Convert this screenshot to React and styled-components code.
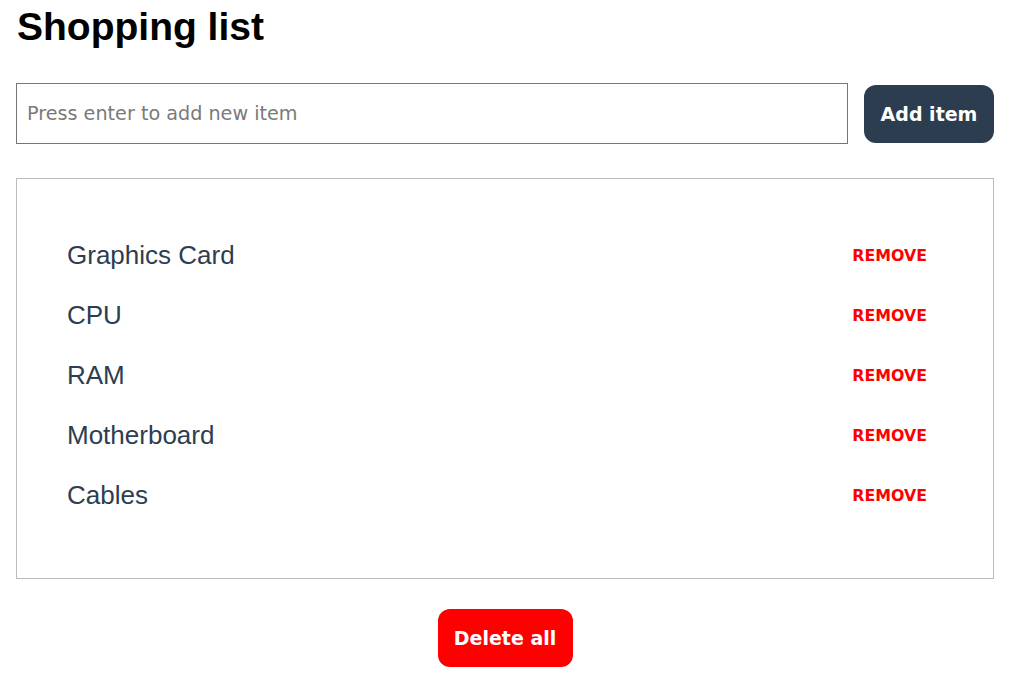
import React, { useState } from "react";
import styled, { createGlobalStyle } from "styled-components";

const GlobalStyle = createGlobalStyle`
  body {
    margin: 0;
    background: #fff;
    font-family: "Liberation Sans", Arial, sans-serif;
  }
`;

const Page = styled.div`
  width: 978px;
  padding: 0 16px;
`;

const Title = styled.h1`
  margin: 5px 0 0 1px;
  font-size: 39px;
  line-height: 44px;
  font-weight: 700;
  color: #000;
`;

const AddRow = styled.div`
  display: flex;
  align-items: center;
  gap: 16px;
  margin-top: 34px;
`;

const ItemInput = styled.input`
  flex: 1;
  height: 61px;
  box-sizing: border-box;
  border: 1px solid #767676;
  padding: 0 10px;
  font-family: "DejaVu Sans", Verdana, sans-serif;
  font-size: 19.2px;
  color: #222;
  outline: none;
  &::placeholder {
    color: #7a7a7a;
  }
`;

const Button = styled.button`
  border: none;
  border-radius: 12px;
  height: 58px;
  padding: 0;
  width: ${(props) => props.width}px;
  background: ${(props) => props.bg};
  color: #fff;
  font-family: "DejaVu Sans", Verdana, sans-serif;
  font-weight: 700;
  font-size: 19px;
  cursor: pointer;
`;

const ListBox = styled.div`
  margin-top: 34px;
  border: 1px solid #bbb;
  padding: 46px 50px 53px 50px;
`;

const Row = styled.div`
  display: flex;
  align-items: center;
  justify-content: space-between;
  height: 60px;
`;

const ItemName = styled.span`
  font-size: 26px;
  color: #2c3e50;
`;

const RemoveLink = styled.span`
  font-family: "DejaVu Sans", Verdana, sans-serif;
  font-weight: 700;
  font-size: 15.8px;
  color: #ff0000;
  margin-right: 16px;
  cursor: pointer;
`;

const Footer = styled.div`
  display: flex;
  justify-content: center;
  margin-top: 30px;
`;

const App = () => {
  const [items] = useState([
    "Graphics Card",
    "CPU",
    "RAM",
    "Motherboard",
    "Cables",
  ]);

  return (
    <Page>
      <GlobalStyle />
      <Title>Shopping list</Title>
      <AddRow>
        <ItemInput placeholder="Press enter to add new item" />
        <Button bg="#2c3d50" width={130}>
          Add item
        </Button>
      </AddRow>
      <ListBox>
        {items.map((item) => (
          <Row key={item}>
            <ItemName>{item}</ItemName>
            <RemoveLink>REMOVE</RemoveLink>
          </Row>
        ))}
      </ListBox>
      <Footer>
        <Button bg="#ff0000" width={135}>
          Delete all
        </Button>
      </Footer>
    </Page>
  );
};

export default App;
